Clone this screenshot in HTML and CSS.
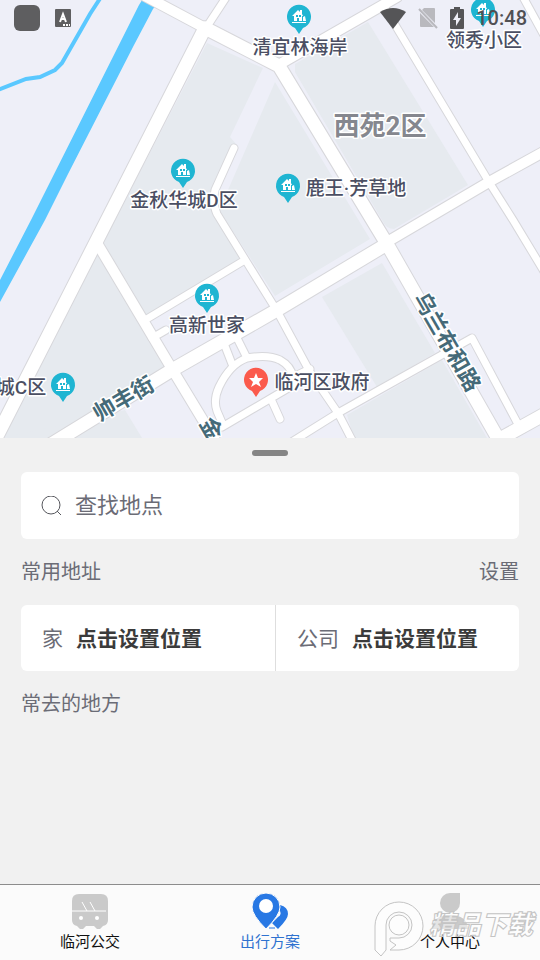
FILE: index.html
```html
<!DOCTYPE html>
<html lang="zh-CN">
<head>
  <meta charset="UTF-8" />
  <meta name="viewport" content="width=device-width, initial-scale=1.0" />
  <title>临河公交</title>
  <link rel="stylesheet" href="styles.css">
</head>
<body>
  <main class="map">
    <svg class="map-canvas" viewBox="0 0 540 438" preserveAspectRatio="xMidYMin slice" role="img" aria-label="地图">
      <defs>
        <g id="roads-minor">
          <path d="M234 148L215 190Q212 203 217 214L246 261L277 311L310 372L338 413L352 440"/>
          <path d="M245 260L145 320M166 330L152 338"/>
          <path d="M225 346L232 364M238 340L246 356"/>
          <path d="M223 425L217 411Q213 400 219 387Q230 364 247 358Q268 354 280 360Q291 366 293 377L310 369"/>
          <path d="M222 427L302 380M271 399L280 419"/>
          <path d="M290 443L338 413L472 338L519 426"/>
          <path d="M385 8L489 182L513 220L545 273M523 -3L545 37"/>
          <path d="M227 -4L206 28"/>
        </g>
        <g id="roads-mid">
          <path d="M145 -4L205 28M280 64L397 -3"/>
          <path d="M545 151L489 182L387 242"/>
          <path d="M97 243L172 369L218 445"/>
        </g>
        <g id="roads-main">
          <path d="M205 28L279 66L387 244L500 442"/>
          <path d="M205 28L97 240L-5 440"/>
          <path d="M387 244L277 310L172 370L50 445"/>
          <path d="M498 440L545 414"/>
        </g>
        <g id="pin-home">
          <path class="pin-home" d="M0 17L-4 11A12 12 0 1 1 4 11Z"/>
          <path class="pin-mark" d="M-7 -1L-1 -7L1 -5V-7H3V-3L4 -1H3V4H0V1H-2V4H-5V-1ZM4 4V0L6 -1L7 4ZM-7 5H7V6H-7Z"/>
          <path class="pin-home" d="M-3 -2H-1V0H-3ZM0 -2H2V0H0Z"/>
        </g>
      </defs>

      <g class="blocks">
        <path d="M207 43L263 68L230 137L237 145L215 190L213 210L246 258L147 317L103 243Z"/>
        <path d="M275 82L370 239L275 296L219 210L228 190Z"/>
        <path d="M97 250L168 368L60 432L3 438Z"/>
        <path d="M125 410L142 438H3L60 425Z"/>
        <path d="M295 64L368 22L468 185L394 229Q386 229 382 220L295 72Z"/>
        <path d="M322 297L382 263L435 353L377 387Z"/>
        <path d="M347 415L442 360L487 438H354Z"/>
      </g>

      <path class="water" d="M139 5L144 -3L157 4L153 9L134 45L68 174L45 220L0 302V280L31 220Z"/>
      <path class="stream" d="M101 -3L90 14L62 63L55 70L40 77L26 79L-2 90"/>

      <g class="road-edge">
        <use href="#roads-minor" class="minor"/>
        <use href="#roads-mid" class="mid"/>
        <use href="#roads-main" class="main"/>
      </g>
      <g class="road-fill">
        <use href="#roads-minor" class="minor"/>
        <use href="#roads-mid" class="mid"/>
        <use href="#roads-main" class="main"/>
      </g>

      <use href="#pin-home" x="299" y="17"/>
      <use href="#pin-home" x="483" y="10"/>
      <use href="#pin-home" x="183" y="171"/>
      <use href="#pin-home" x="288" y="186"/>
      <use href="#pin-home" x="207" y="296"/>
      <use href="#pin-home" x="63" y="385"/>
      <path class="pin-gov" d="M256 397L252 391A12 12 0 1 1 260 391Z"/>
      <path class="pin-mark" d="M256 373L258 378L263 378L259 382L261 387L256 384L251 387L253 382L249 378L254 378Z"/>

      <g class="place">
        <text x="300" y="54">清宜林海岸</text>
        <text x="484" y="47">领秀小区</text>
        <text x="184" y="207">金秋华城D区</text>
        <text x="356" y="195">鹿王·芳草地</text>
        <text x="207" y="332">高新世家</text>
        <text x="21" y="394">城C区</text>
        <text x="322" y="389">临河区政府</text>
      </g>
      <text class="area" x="380" y="135">西苑2区</text>
      <g class="street">
        <text transform="translate(99 422) rotate(-30)">帅丰街</text>
        <text transform="translate(199 423) rotate(60)">金</text>
        <text transform="translate(413 298) rotate(60)">乌兰布和路</text>
      </g>
    </svg>

    <header class="status">
      <span class="status-app"></span>
      <svg class="status-icon" width="16" height="18" viewBox="0 0 16 18" aria-hidden="true">
        <rect width="16" height="18" rx="1" fill="#5e5e60"/>
        <path d="M5 13L8 5L11 13M6 10H10" fill="none" stroke="#fff" stroke-width="2"/>
        <path d="M8 15H10V17H8ZM11 15H13V17H11ZM14 15H15V17H14Z" fill="#fff"/>
      </svg>
      <span class="status-gap"></span>
      <svg width="26" height="21" viewBox="0 0 26 21" aria-hidden="true">
        <path d="M0 4Q13 -4 26 4L13 21Z" fill="#555557"/>
      </svg>
      <svg width="20" height="22" viewBox="0 0 20 22" aria-hidden="true">
        <path d="M6 1H16Q17 1 17 2V16L4 3ZM2 6L16 20H3Q2 20 2 19Z" fill="#b9b9be"/>
        <path d="M1 2L19 21" stroke="#b9b9be" stroke-width="2"/>
      </svg>
      <svg width="14" height="22" viewBox="0 0 14 22" aria-hidden="true">
        <path d="M4 0H10V2H13Q14 2 14 3V21Q14 22 13 22H1Q0 22 0 21V3Q0 2 1 2H4Z" fill="#555557"/>
        <path d="M8 5L3 13H6V19L11 11H8Z" fill="#eeeff7"/>
      </svg>
      <time class="clock">10:48</time>
    </header>
  </main>

  <section class="sheet">
    <div class="handle"></div>

    <label class="search">
      <svg width="20" height="20" viewBox="0 0 20 20" aria-hidden="true">
        <circle cx="10" cy="9" r="9" fill="none" stroke="#55565c"/>
        <path d="M16 15L20 19" stroke="#55565c"/>
      </svg>
      <input type="text" placeholder="查找地点" aria-label="查找地点">
    </label>

    <div class="row">
      <h2>常用地址</h2>
      <button class="setting" type="button">设置</button>
    </div>

    <div class="address">
      <button class="address-item" type="button"><span>家</span><b>点击设置位置</b></button>
      <button class="address-item" type="button"><span>公司</span><b>点击设置位置</b></button>
    </div>

    <div class="row">
      <h2>常去的地方</h2>
    </div>
  </section>

  <nav class="tabs">
    <a class="tab" href="#bus">
      <svg width="36" height="36" viewBox="0 0 36 36" aria-hidden="true">
        <path d="M7 1H29Q36 1 36 8V27Q36 32 31 33L28 36H25L22 33H14L11 36H8L5 33Q0 32 0 27V8Q0 1 7 1Z" fill="#cacaca"/>
        <path d="M0 18H34M10 9L15 18M18 9L23 18" stroke="#fff" stroke-width="1"/>
        <circle cx="9" cy="25" r="2" fill="#fff"/>
        <circle cx="25" cy="25" r="2" fill="#fff"/>
      </svg>
      <span>临河公交</span>
    </a>
    <a class="tab active" href="#plan">
      <svg width="36" height="36" viewBox="0 0 36 36" aria-hidden="true">
        <path d="M28 12Q36 14 36 21Q36 26 26 36L20 30L26 24A4 4 0 0 0 27 17Z" fill="#2878e4"/>
        <path d="M14 36Q0 22 0 14A14 14 0 0 1 28 14Q28 22 14 36Z" fill="#2878e4" stroke="#fbfbfb" stroke-width="1"/>
        <path d="M17 35H23" stroke="#2878e4"/>
        <circle cx="14" cy="13" r="7" fill="#fff"/>
      </svg>
      <span>出行方案</span>
    </a>
    <a class="tab" href="#me">
      <svg width="36" height="36" viewBox="0 0 36 36" aria-hidden="true">
        <path d="M18 0H28V10A10 10 0 1 1 18 0Z" fill="#cacaca"/>
        <path d="M0 36Q1 22 18 22Q35 22 36 36Z" fill="#cacaca"/>
      </svg>
      <span>个人中心</span>
    </a>
    <svg class="watermark" width="166" height="60" viewBox="0 0 166 60" aria-hidden="true">
      <path d="M1 26A24 24 0 1 1 25 50H16L22 45L16 41V38H25A13 13 0 1 0 12 25V50L7 56L1 50Z"/>
      <circle cx="25" cy="25" r="10"/>
      <text x="55" y="34">精品下载</text>
    </svg>
  </nav>
</body>
</html>
```
FILE: styles.css
```css
* {
  box-sizing: border-box;
}
body {
  margin: 0;
  min-height: 100vh;
  display: flex;
  flex-direction: column;
  background: #f1f1f1;
  color: #6b6c76;
  font-family: Roboto, "Noto Sans CJK SC", sans-serif;
}
button {
  border: 0;
  padding: 0;
  background: none;
  color: inherit;
  font: inherit;
  cursor: pointer;
}

/* map */
.map {
  position: relative;
  background: #eeeff8;
}
.map-canvas {
  display: block;
  width: 100%;
}
.blocks {
  fill: #e6eaef;
}
.water {
  fill: #5ac8ff;
}
.stream {
  fill: none;
  stroke: #5ac8ff;
  stroke-width: 4px;
}
.road-edge,
.road-fill {
  fill: none;
  stroke-linecap: round;
  stroke-linejoin: round;
}
.road-edge {
  stroke: #d7d7db;
}
.road-fill {
  stroke: #fff;
}
.road-edge .minor {
  stroke-width: 9px;
}
.road-edge .mid {
  stroke-width: 12px;
}
.road-edge .main {
  stroke-width: 15px;
}
.road-fill .minor {
  stroke-width: 7px;
}
.road-fill .mid {
  stroke-width: 10px;
}
.road-fill .main {
  stroke-width: 13px;
}
.pin-home {
  fill: #1fb5d2;
}
.pin-gov {
  fill: #fb5a4c;
}
.pin-mark {
  fill: #fff;
}
.map-canvas text {
  stroke: #fff;
  stroke-width: 3px;
  stroke-linejoin: round;
  paint-order: stroke;
  font-weight: 500;
}
.place {
  fill: #4b4f63;
  font-size: 19px;
  text-anchor: middle;
}
.map-canvas .area {
  fill: #85878e;
  font-size: 26px;
  font-weight: 700;
  text-anchor: middle;
}
.street {
  fill: #456a78;
  font-size: 22px;
}
.map-canvas .street text {
  font-weight: 700;
}

/* status bar */
.status {
  position: absolute;
  top: 0;
  left: 0;
  right: 0;
  height: 36px;
  padding: 0 13px 0 14px;
  display: flex;
  align-items: center;
  gap: 12px;
}
.status-app {
  width: 26px;
  height: 26px;
  border-radius: 6px;
  background: #5e5e60;
}
.status-icon {
  margin-left: 3px;
}
.status-gap {
  flex: 1;
}
.clock {
  color: #505054;
  font-size: 20px;
  font-weight: 500;
}

/* bottom sheet */
.sheet {
  flex: 1;
  padding: 12px 21px;
}
.handle {
  width: 36px;
  height: 6px;
  margin: 0 auto 16px;
  border-radius: 3px;
  background: #858585;
}
.search {
  height: 67px;
  padding: 0 20px;
  display: flex;
  align-items: center;
  gap: 14px;
  border-radius: 6px;
  background: #fff;
}
.search input {
  flex: 1;
  min-width: 0;
  padding: 0;
  border: 0;
  outline: 0;
  background: none;
  color: #6b6c76;
  font: inherit;
  font-size: 22px;
}
.search input::placeholder {
  color: #6b6c76;
  opacity: 1;
}
.row {
  height: 66px;
  padding-bottom: 4px;
  display: flex;
  align-items: center;
  justify-content: space-between;
  font-size: 20px;
}
.row h2 {
  margin: 0;
  font-size: 20px;
  font-weight: 400;
}
.address {
  height: 66px;
  display: grid;
  grid-template-columns: 51fr 49fr;
  border-radius: 6px;
  background: #fff;
}
.address-item {
  padding: 0 0 3px 21px;
  display: flex;
  align-items: center;
  gap: 13px;
  font-size: 21px;
}
.address-item + .address-item {
  border-left: 1px solid #dedede;
}
.address-item b {
  color: #3b3b3b;
}

/* tabs */
.tabs {
  position: relative;
  height: 76px;
  display: flex;
  border-top: 1px solid #8c8c8c;
  background: #fbfbfb;
}
.tab {
  flex: 1;
  padding-top: 8px;
  display: flex;
  flex-direction: column;
  align-items: center;
  color: #111;
  font-size: 15px;
  line-height: 26px;
  text-decoration: none;
}
.tab.active {
  color: #2f72d0;
}
.watermark {
  position: absolute;
  right: 0;
  bottom: 0;
  fill: #fff;
  fill-opacity: 0.5;
  stroke: #c4c4c4;
  pointer-events: none;
}
.watermark text {
  font-size: 26px;
  font-style: italic;
  font-weight: 900;
}
```
